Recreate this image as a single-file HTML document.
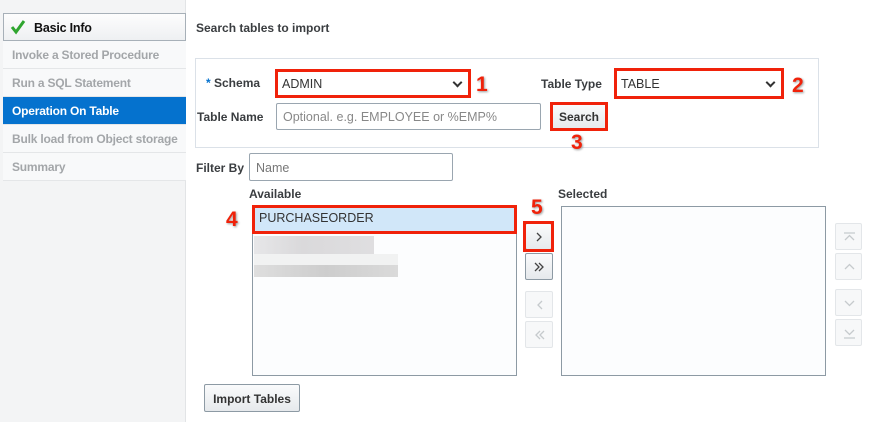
<!DOCTYPE html>
<html><head><meta charset="utf-8"><style>
*{box-sizing:border-box;margin:0;padding:0}
body{width:870px;height:422px;overflow:hidden;background:#fff;font-family:"Liberation Sans",Arial,sans-serif;position:relative;color:#333}
.a{position:absolute}
.side{left:0;top:0;width:186px;height:422px;background:#f3f4f5;border-right:1px solid #e2e4e6}
.it{position:absolute;left:3px;width:183px;height:28px;font-size:12px;letter-spacing:-0.2px;white-space:nowrap;overflow:hidden;font-weight:bold;color:#a3a6a9;padding:7px 0 0 9px;background:#f8f9fa;border-bottom:1px solid #e4e6e8}
.lbl{position:absolute;font-size:12px;font-weight:bold;color:#3a3d40}
.inp{position:absolute;border:1px solid #9aa6b0;background:#fff;font-size:12.5px;border-radius:2px}
.red{position:absolute;border:3px solid #f0220a}
.num{position:absolute;font-size:21px;font-weight:bold;color:#f0220a;text-shadow:1px 1px 2px #999}
.btn{position:absolute;border:1px solid #8d9aa4;background:linear-gradient(#fafbfc,#e6e9ec);border-radius:2px;text-align:center;font-size:13px;color:#333}
.dis{position:absolute;border:1px solid #e3e6e9;background:#f7f8f9;border-radius:2px;text-align:center;color:#c6cacd;font-size:13px}
.list{position:absolute;border:1px solid #8d9aa4;background:#fcfdfe}
.chev{position:absolute;right:8px;top:8px;width:7px;height:7px;border-right:2px solid #333;border-bottom:2px solid #333;transform:rotate(45deg)}
svg{position:absolute;left:0;top:0}
</style></head><body>
<div class="a side"></div>
<div class="it" style="top:13px;height:28px;background:linear-gradient(#fdfdfd,#eef0f2);border:1px solid #a7b0b8;color:#111;padding-left:30px;font-size:12.5px">
<svg width="24" height="26"><path d="M8 13 L12 18 L20 7" fill="none" stroke="#2fa52f" stroke-width="3"/></svg>Basic Info</div>
<div class="it" style="top:41px">Invoke a Stored Procedure</div>
<div class="it" style="top:69px">Run a SQL Statement</div>
<div class="it" style="top:97px;background:#0572ce;color:#fff">Operation On Table</div>
<div class="it" style="top:125px">Bulk load from Object storage</div>
<div class="it" style="top:153px">Summary</div>

<div class="lbl" style="left:196px;top:21px">Search tables to import</div>
<div class="a" style="left:195px;top:58px;width:624px;height:90px;border:1px solid #dbe1e8"></div>

<div class="lbl" style="left:206px;top:76px"><span style="color:#0572ce">*</span> Schema</div>
<div class="inp" style="left:276px;top:70px;width:194px;height:27px;padding:6px 5px">ADMIN<div class="chev"></div></div>
<div class="red" style="left:275px;top:69px;width:196px;height:29px"></div>
<div class="num" style="left:476px;top:73px">1</div>

<div class="lbl" style="left:541px;top:77px">Table Type</div>
<div class="inp" style="left:615px;top:69px;width:168px;height:29px;padding:7px 5px">TABLE<div class="chev" style="top:9px"></div></div>
<div class="red" style="left:614px;top:68px;width:170px;height:31px"></div>
<div class="num" style="left:792px;top:74px">2</div>

<div class="lbl" style="left:197px;top:110px">Table Name</div>
<div class="inp" style="left:276px;top:103px;width:265px;height:27px;padding:6px 6px;color:#888">Optional. e.g. EMPLOYEE or %EMP%</div>
<div class="btn" style="left:551px;top:103px;width:56px;height:27px;padding-top:6px;font-weight:bold;font-size:12px">Search</div>
<div class="red" style="left:550px;top:102px;width:58px;height:29px"></div>
<div class="num" style="left:571px;top:131px">3</div>

<div class="lbl" style="left:196px;top:161px">Filter By</div>
<div class="inp" style="left:249px;top:153px;width:204px;height:28px;padding:7px 6px;color:#777">Name</div>

<div class="lbl" style="left:249px;top:187px">Available</div>
<div class="lbl" style="left:558px;top:187px">Selected</div>
<div class="list" style="left:252px;top:206px;width:265px;height:170px"></div>
<div class="list" style="left:561px;top:206px;width:265px;height:170px"></div>
<div class="a" style="left:254px;top:207px;width:261px;height:25px;background:#d1e7f9;font-size:12.5px;padding:4px 0 0 5px">PURCHASEORDER</div>
<div class="red" style="left:252px;top:205px;width:265px;height:29px"></div>
<div class="num" style="left:226px;top:208px">4</div>
<div class="a" style="left:254px;top:236px;width:120px;height:18px;background:linear-gradient(90deg,#e4e4e6,#d6d5d7 40%,#dcdbdd);opacity:.9"></div>
<div class="a" style="left:254px;top:254px;width:144px;height:11px;background:#f1f2f2"></div>
<div class="a" style="left:254px;top:265px;width:144px;height:12px;background:linear-gradient(90deg,#dedede,#cdcdcd 50%,#dadada)"></div>

<div class="btn" style="left:525px;top:223px;width:27px;height:27px"><svg width="27" height="27"><path d="M11 9 L15 13 L11 17" fill="none" stroke="#444" stroke-width="1.3"/></svg></div>
<div class="red" style="left:523px;top:221px;width:31px;height:31px"></div>
<div class="num" style="left:531px;top:196px">5</div>
<div class="btn" style="left:525px;top:253px;width:28px;height:27px"><svg width="28" height="27"><path d="M9 9 L13 13 L9 17 M13 9 L17 13 L13 17" fill="none" stroke="#444" stroke-width="1.3"/></svg></div>
<div class="dis" style="left:525px;top:291px;width:28px;height:27px"><svg width="28" height="27"><path d="M16 9 L12 13 L16 17" fill="none" stroke="#c6cacd" stroke-width="1.3"/></svg></div>
<div class="dis" style="left:525px;top:321px;width:28px;height:27px"><svg width="28" height="27"><path d="M14 9 L10 13 L14 17 M18 9 L14 13 L18 17" fill="none" stroke="#c6cacd" stroke-width="1.3"/></svg></div>

<div class="dis" style="left:835px;top:223px;width:27px;height:27px"><svg width="27" height="27"><path d="M8 9 H19 M9 16 L13.5 11.5 L18 16" fill="none" stroke="#c6cacd" stroke-width="1.3"/></svg></div>
<div class="dis" style="left:835px;top:253px;width:27px;height:27px"><svg width="27" height="27"><path d="M9 15 L13.5 10.5 L18 15" fill="none" stroke="#c6cacd" stroke-width="1.3"/></svg></div>
<div class="dis" style="left:835px;top:289px;width:27px;height:27px"><svg width="27" height="27"><path d="M9 11 L13.5 15.5 L18 11" fill="none" stroke="#c6cacd" stroke-width="1.3"/></svg></div>
<div class="dis" style="left:835px;top:319px;width:27px;height:27px"><svg width="27" height="27"><path d="M8 18 H19 M9 10 L13.5 14.5 L18 10" fill="none" stroke="#c6cacd" stroke-width="1.3"/></svg></div>

<div class="btn" style="left:204px;top:384px;width:96px;height:28px;padding-top:7px;font-weight:bold;font-size:12px">Import Tables</div>
</body></html>
